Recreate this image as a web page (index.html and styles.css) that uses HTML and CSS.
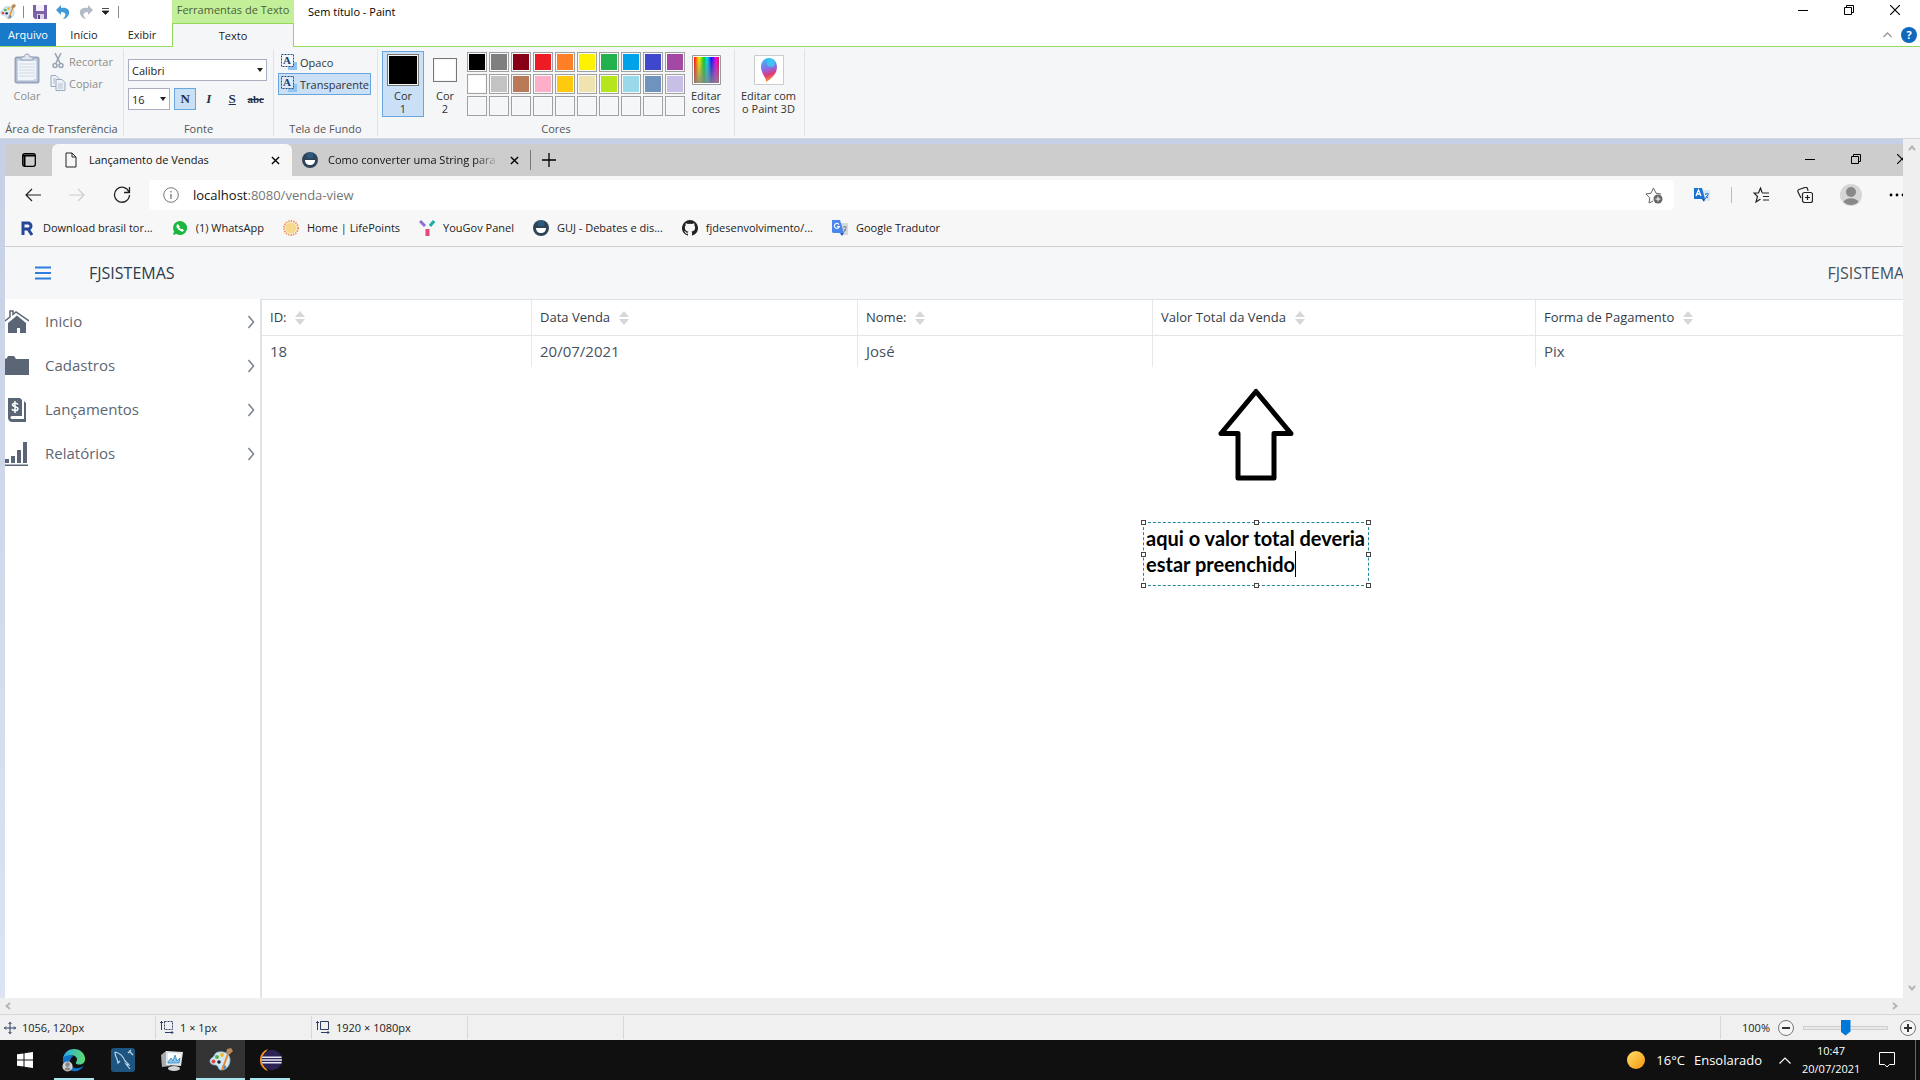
FILE: index.html
```html
<!DOCTYPE html>
<html lang="pt-BR">
<head>
    <meta charset="UTF-8">
    <meta name="viewport" content="width=device-width, initial-scale=1.0">
    <title>Sem título - Paint</title>
    <link rel="stylesheet" href="styles.css">
</head>
<body>
    <!-- shared symbols -->
    <svg class="symbols" aria-hidden="true">
        <symbol id="palette" viewBox="0 0 24 24">
            <path d="M10 4c7-1 11 3 11 8 0 6-4 10-9 10-3 0-2-4-5-5-3 0-6-1-6-4s3-3 4-5 2-4 5-4z" fill="#d3e9f5" stroke="#8fbfd8" stroke-width=".8"/>
            <circle cx="4.500" cy="13.500" r="2" fill="#e0483c"/><circle cx="8" cy="9" r="2" fill="#57b04a"/>
            <circle cx="13" cy="7" r="2" fill="#f2b632"/><circle cx="10" cy="14" r="1.800" fill="#223"/><circle cx="15" cy="19" r="2" fill="#3b82c8"/>
            <path d="M19 6l-6 16" stroke="#e8892b" stroke-width="2"/><path d="M18 1l4-1 2 3-3 3-2 1-2-2z" fill="#b98a5a"/>
        </symbol>
        <symbol id="guj" viewBox="0 0 16 16">
            <circle cx="8" cy="8" r="8" fill="#2f4459"/><path d="M6 1v5M8 0v6M10 1v5" stroke="#2f6ea3"/><path d="M3 8h10c0 3-2 5-5 5s-5-2-5-5z" fill="#fff"/>
        </symbol>
        <symbol id="sorter" viewBox="0 0 10 14">
            <path d="M5 0l5 6H0zM5 14l5-6H0z" fill="#d5d8db"/>
        </symbol>
        <symbol id="chevron" viewBox="0 0 8 14">
            <path d="M1.500 1l5 6-5 6" fill="none" stroke="#7d858e" stroke-width="1.600"/>
        </symbol>
        <symbol id="minimize" viewBox="0 0 10 10"><path d="M0 5.5h10" stroke="#000"/></symbol>
        <symbol id="restore" viewBox="0 0 10 10"><path d="M.5 2.5h7v7h-7zM2.5 2.5v-2h7v7h-2" fill="none" stroke="#000"/></symbol>
        <symbol id="close" viewBox="0 0 10 10"><path d="M0 0l10 10M10 0L0 10" stroke="#000" stroke-width="1.2"/></symbol>
    </svg>

    <header class="titlebar">
        <div class="quick">
            <svg class="q-palette" width="16" height="16"><use href="#palette"/></svg>
            <i class="q-sep"></i>
            <button aria-label="Salvar"><svg width="14" height="14" viewBox="0 0 14 14"><path d="M0 0h14v14H2l-2-2z" fill="#7d62a8"/><path d="M3 0h8v6H3z" fill="#f4effa"/><path d="M4 9h7v5H4z" fill="#d9d3e3"/><path d="M5 10h2v4H5z" fill="#5b4580"/></svg></button>
            <button aria-label="Desfazer"><svg width="14" height="14" viewBox="0 0 14 14"><path d="M5 0v3c5-1 9 1 8 6-1 3-4 5-6 5 4-4 3-7-2-7v3L0 5z" fill="#3f9ad6"/></svg></button>
            <button aria-label="Refazer"><svg width="14" height="14" viewBox="0 0 14 14"><path d="M9 0v3C4 2 0 4 1 9c1 3 4 5 6 5-4-4-3-7 2-7v3l5-5z" fill="#b3bac8"/></svg></button>
            <button aria-label="Personalizar"><svg width="7" height="7" viewBox="0 0 7 7"><path d="M0 .5h7M0 3h7L3.500 6.500z" stroke="#222" stroke-width=".8" fill="#222"/></svg></button>
            <i class="q-sep"></i>
        </div>
        <div class="context-title">Ferramentas de Texto</div>
        <h1 class="doc-title">Sem título - Paint</h1>
        <div class="win-buttons">
            <button aria-label="Minimizar"><svg width="10" height="10"><use href="#minimize"/></svg></button>
            <button aria-label="Restaurar"><svg width="10" height="10"><use href="#restore"/></svg></button>
            <button aria-label="Fechar"><svg width="10" height="10"><use href="#close"/></svg></button>
        </div>
    </header>

    <nav class="ribbon-tabs">
        <button class="tab-file">Arquivo</button>
        <button class="tab-home">Início</button>
        <button class="tab-view">Exibir</button>
        <button class="tab-text">Texto</button>
        <div class="ribbon-help">
            <button aria-label="Minimizar faixa"><svg width="9" height="6" viewBox="0 0 9 6"><path d="M.5 5l4-4 4 4" fill="none" stroke="#999" stroke-width="1.3"/></svg></button>
            <button class="help" aria-label="Ajuda">?</button>
        </div>
    </nav>

    <section class="ribbon">
        <div class="group clipboard">
            <div class="group-body">
                <button class="big" disabled>
                    <svg width="26" height="32" viewBox="0 0 26 32"><rect x="1.500" y="4.500" width="23" height="25" rx="1.500" fill="#c9d4e4" stroke="#97a4ba" stroke-width="2"/><path d="M4 8h18v17l-3 2H4z" fill="#f1f5fa"/><path d="M5 11h16M5 14h16M5 17h16M5 20h16M5 23h16" stroke="#cfd8e5"/><path d="M7 7V4h3c0-4 6-4 6 0h3v3z" fill="#dde4ee" stroke="#97a4ba"/></svg>
                    <span>Colar</span>
                </button>
                <div class="stack">
                    <button class="row-btn" disabled><svg width="16" height="16" viewBox="0 0 16 16"><path d="M5 0l5 10M11 0L6 10" stroke="#9aa3b3" stroke-width="1.600"/><circle cx="5" cy="12.500" r="2" fill="none" stroke="#9aa3b3" stroke-width="1.500"/><circle cx="11" cy="12.500" r="2" fill="none" stroke="#9aa3b3" stroke-width="1.500"/></svg>Recortar</button>
                    <button class="row-btn" disabled><svg width="16" height="16" viewBox="0 0 16 16"><path d="M1 .5h5l3 3v8H1z" fill="#eef2f7" stroke="#9aa8bf"/><path d="M6 4.500h6l3 3v8H6z" fill="#eef2f7" stroke="#9aa8bf"/><path d="M8 9h5M8 11h5M8 13h5M3 4h3M3 6h2M3 8h2" stroke="#b4bfd1"/></svg>Copiar</button>
                </div>
            </div>
            <div class="group-name">Área de Transferência</div>
        </div>

        <div class="group font">
            <div class="group-body">
                <label class="combo combo-font"><select aria-label="Família da fonte"><option>Calibri</option></select><i></i></label>
                <div class="font-row">
                    <label class="combo combo-size"><select aria-label="Tamanho da fonte"><option>16</option></select><i></i></label>
                    <button class="fmt active">N</button>
                    <button class="fmt italic">I</button>
                    <button class="fmt underline">S</button>
                    <button class="fmt strike">abc</button>
                </div>
            </div>
            <div class="group-name">Fonte</div>
        </div>

        <div class="group background">
            <div class="group-body">
                <button class="row-btn"><svg width="16" height="16" viewBox="0 0 16 16"><path d="M9 8h7v8H7v-3z" fill="#8fc4f5"/><path d="M.5.5h12v12H.5z" fill="#f4f8fc" stroke="#2a4a73" stroke-dasharray="2 1"/><text x="2" y="10" class="glyph-a">A</text></svg>Opaco</button>
                <button class="row-btn active"><svg width="16" height="16" viewBox="0 0 16 16"><path d="M9 8h7v8H7v-3z" fill="#8fc4f5"/><path d="M.5.5h12v12H.5z" fill="#dcebfa" stroke="#2a4a73" stroke-dasharray="2 1"/><text x="2" y="10" class="glyph-a">A</text></svg>Transparente</button>
            </div>
            <div class="group-name">Tela de Fundo</div>
        </div>

        <div class="group colors">
            <div class="group-body">
                <button class="color-btn active"><i class="well well-1"></i><span>Cor<br>1</span></button>
                <button class="color-btn"><i class="well well-2"></i><span>Cor<br>2</span></button>
                <div class="swatches" id="swatches"></div>
                <button class="color-btn"><svg width="29" height="30" viewBox="0 0 29 30">
                    <defs>
                        <linearGradient id="hues"><stop offset="0" stop-color="#f00"/><stop offset=".2" stop-color="#fe0"/><stop offset=".4" stop-color="#0c2"/><stop offset=".52" stop-color="#0df"/><stop offset=".7" stop-color="#11e"/><stop offset=".88" stop-color="#e0e"/><stop offset="1" stop-color="#e04"/></linearGradient>
                        <linearGradient id="fade" x2="0" y2="1"><stop offset="0" stop-color="#888" stop-opacity="0"/><stop offset="1" stop-color="#888" stop-opacity=".85"/></linearGradient>
                    </defs>
                    <path d="M.5.5h28v29H.5z" fill="#fff" stroke="#999"/><path d="M2 2h25v26H2z" fill="url(#hues)"/><path d="M2 2h25v26H2z" fill="url(#fade)"/></svg>
                    <span>Editar<br>cores</span></button>
            </div>
            <div class="group-name">Cores</div>
        </div>

        <div class="group paint3d">
            <div class="group-body">
                <button class="color-btn"><svg width="30" height="30" viewBox="0 0 30 30">
                    <defs><linearGradient id="drop" x1=".3" x2=".5" y2="1"><stop offset="0" stop-color="#29c5f2"/><stop offset=".45" stop-color="#8a6be6"/><stop offset=".7" stop-color="#e0387e"/><stop offset="1" stop-color="#f9a01b"/></linearGradient></defs>
                    <path d="M.5.5h29v29H.5z" fill="#fff" stroke="#ccc"/><path d="M12 27c1-4-5-8-5-15 0-5 3-9 8-9s8 4 8 9c0 7-6 12-11 15z" fill="url(#drop)"/><circle cx="17" cy="8" r="4" fill="#36d6f5" opacity=".7"/></svg>
                    <span>Editar com<br>o Paint 3D</span></button>
            </div>
        </div>
    </section>

    <main class="workspace">
        <div class="canvas">
            <div class="edge">
                <div class="edge-tabs">
                    <button class="tab-actions" aria-label="Guias"><svg width="14" height="14" viewBox="0 0 14 14"><rect x=".7" y=".7" width="12.600" height="12.600" rx="2" fill="none" stroke="#000" stroke-width="1.300"/><path d="M1 2.500h12M2.500 2v11" stroke="#000" stroke-width="2"/></svg></button>
                    <div class="edge-tab current">
                        <svg width="12" height="16" viewBox="0 0 12 16"><path d="M1 1h6l4 4v10H1zM7 1v4h4" fill="none" stroke="#222"/></svg>
                        <span>Lançamento de Vendas</span>
                        <button aria-label="Fechar guia"><svg width="9" height="9" viewBox="0 0 10 10"><path d="M1 1l8 8M9 1L1 9" stroke="#000" stroke-width="1.500"/></svg></button>
                    </div>
                    <div class="edge-tab other">
                        <svg width="16" height="16"><use href="#guj"/></svg>
                        <span>Como converter uma String para</span>
                        <button aria-label="Fechar guia"><svg width="9" height="9" viewBox="0 0 10 10"><path d="M1 1l8 8M9 1L1 9" stroke="#000" stroke-width="1.500"/></svg></button>
                    </div>
                    <button class="new-tab" aria-label="Nova guia"><svg width="14" height="14" viewBox="0 0 14 14"><path d="M7 0v14M0 7h14" stroke="#000" stroke-width="1.300"/></svg></button>
                    <div class="edge-win">
                        <button aria-label="Minimizar"><svg width="10" height="10"><use href="#minimize"/></svg></button>
                        <button aria-label="Restaurar"><svg width="10" height="10"><use href="#restore"/></svg></button>
                        <button aria-label="Fechar"><svg width="10" height="10"><use href="#close"/></svg></button>
                    </div>
                </div>

                <div class="edge-bar">
                    <div class="nav-buttons">
                        <button aria-label="Voltar"><svg width="16" height="14" viewBox="0 0 16 14"><path d="M16 7H1M7 1L1 7l6 6" fill="none" stroke="#222" stroke-width="1.200"/></svg></button>
                        <button aria-label="Avançar"><svg width="16" height="14" viewBox="0 0 16 14"><path d="M0 7h15M9 1l6 6-6 6" fill="none" stroke="#ccc" stroke-width="1.200"/></svg></button>
                        <button aria-label="Atualizar"><svg width="18" height="18" viewBox="0 0 18 18"><path d="M16 6A7.500 7.500 0 1 0 16.500 9M16.500 1v5.500H11" fill="none" stroke="#222" stroke-width="1.300"/></svg></button>
                    </div>
                    <div class="address">
                        <svg width="16" height="16" viewBox="0 0 16 16"><circle cx="8" cy="8" r="7.300" fill="none" stroke="#777"/><path d="M8 7v5M8 4v1.500" stroke="#777" stroke-width="1.300"/></svg>
                        <a class="url" href="#">localhost<span>:8080/venda-view</span></a>
                        <svg width="18" height="17" viewBox="0 0 18 17"><path d="M8 14l-4 2 .8-5L1 7l5-.8L8.500 1 11 6.200l5 .8" fill="none" stroke="#666"/><circle cx="13" cy="12" r="4.500" fill="#666"/><path d="M13 9.500v5M10.500 12h5" stroke="#fff"/></svg>
                    </div>
                    <div class="edge-tools">
                        <svg width="16" height="16" viewBox="0 0 16 16"><path d="M6 3h10v11H8z" fill="#dce6f0"/><path d="M0 1h8l3 11H0z" fill="#1b73d1"/><path d="M8 12h3l-1 3z" fill="#154fa0"/><path d="M11 7h4M13 6v1M14 8l-3 4M12 9l2 2" stroke="#1b73d1" fill="none"/><path d="M2 9l2.500-6L7 9M3 7h3" stroke="#fff" stroke-width="1.300" fill="none"/></svg>
                        <i class="tool-sep"></i>
                        <svg width="17" height="16" viewBox="0 0 17 16"><path d="M9 5.500L7.500 1 5.500 6H1l3.500 3.500L3 15l4.500-3M9 6h7M10 9.500h6M10 13h6" fill="none" stroke="#222" stroke-width="1.200"/></svg>
                        <svg width="16" height="16" viewBox="0 0 16 16"><rect x="5.500" y="5.500" width="10" height="10" rx="2" fill="none" stroke="#222" stroke-width="1.200"/><path d="M10.500 8v5M8 10.500h5M4 11L1 5c-.5-1 0-2 1-2.500l6-2c1-.3 2 0 2.500 1L11 4" stroke="#222" stroke-width="1.200" fill="none"/></svg>
                        <svg width="22" height="22" viewBox="0 0 22 22"><circle cx="11" cy="11" r="11" fill="#d6d6d6"/><circle cx="11" cy="8" r="5" fill="#888"/><path d="M3.500 18c2-5 13-5 15 0-4 4-11 4-15 0z" fill="#888"/></svg>
                        <svg width="16" height="4" viewBox="0 0 16 4"><circle cx="2" cy="2" r="1.400"/><circle cx="8" cy="2" r="1.400"/><circle cx="14" cy="2" r="1.400"/></svg>
                    </div>
                </div>

                <nav class="bookmarks">
                    <a href="#"><svg width="16" height="16" viewBox="0 0 16 16"><path d="M4 15V3h5a3 3 0 0 1 0 6H5M9 9l4 6" fill="none" stroke="#23479b" stroke-width="3"/></svg>Download brasil tor...</a>
                    <a href="#"><svg width="16" height="16" viewBox="0 0 16 16"><path d="M8 1a7 7 0 1 1-3.500 13L1 15l1-3.500A7 7 0 0 1 8 1z" fill="#1bb741"/><path d="M5.500 4.500c-1 1-1 3 1.500 5s4 2 4.500 1L10 9l-1 .8L6.500 7l.8-1z" fill="#fff" stroke="#fff"/></svg>(1) WhatsApp</a>
                    <a href="#"><svg width="16" height="16" viewBox="0 0 16 16"><circle cx="8" cy="8" r="7" fill="none" stroke="#ef9a5b" stroke-width="2" stroke-dasharray="1.500 1"/><circle cx="8" cy="8" r="5.500" fill="#f6d98c"/></svg>Home | LifePoints</a>
                    <a href="#"><svg width="16" height="16" viewBox="0 0 16 16"><path d="M1 1l5 5" stroke="#8a6fd8" stroke-width="3"/><path d="M15 1l-4 5" stroke="#1bb0a4" stroke-width="3"/><path d="M8.500 9v7" stroke="#e5487c" stroke-width="4"/></svg>YouGov Panel</a>
                    <a href="#"><svg width="16" height="16"><use href="#guj"/></svg>GUJ - Debates e dis...</a>
                    <a href="#"><svg width="16" height="16" viewBox="0 0 16 16"><path d="M8 0a8 8 0 0 0-2.500 15.600c.4 0 .5-.2.500-.4v-1.500c-2.200.5-2.700-1-2.700-1-.4-.9-.9-1.200-.9-1.200-.7-.5.1-.5.1-.5.800.1 1.200.8 1.200.8.700 1.300 1.900.9 2.300.7.100-.5.300-.9.500-1.100-1.800-.2-3.600-.9-3.600-4 0-.9.300-1.600.8-2.100-.1-.2-.4-1 .1-2.100 0 0 .7-.2 2.200.8a7.500 7.500 0 0 1 4 0c1.500-1 2.200-.8 2.200-.8.400 1.100.2 1.900.1 2.100.5.600.8 1.300.8 2.100 0 3.100-1.900 3.700-3.700 3.900.3.300.6.800.6 1.500v2.400c0 .2.100.5.500.4A8 8 0 0 0 8 0z" fill="#222"/></svg>fjdesenvolvimento/...</a>
                    <a href="#"><svg width="16" height="16" viewBox="0 0 16 16"><path d="M6 3h10v12H8z" fill="#d5dae0"/><path d="M0 0h8l4 13H1l-1-1z" fill="#4a86ee"/><path d="M8 13h4l-2 3z" fill="#2b5dc0"/><path d="M7 4.500a2.500 2.500 0 1 0 .3 2H5" stroke="#fff" stroke-width="1.100" fill="none"/><path d="M11 7h4M13 6v1M14 8l-2 4M12 9l2 2" stroke="#7d8791" fill="none"/></svg>Google Tradutor</a>
                </nav>

                <div class="app">
                    <header class="app-header">
                        <button aria-label="Menu"><svg width="16" height="14" viewBox="0 0 16 14"><path d="M0 1.500h16M0 7h16M0 12.500h16" stroke="#2f7de0" stroke-width="2"/></svg></button>
                        <h2>FJSISTEMAS</h2>
                        <span class="user">FJSISTEMAS</span>
                    </header>
                    <div class="app-body">
                        <nav class="drawer">
                            <a href="#"><svg width="24" height="24" viewBox="0 0 24 24"><path d="M12 5.500l9 7.500v10h-6v-5h-3v5H3V13z" fill="#5a6675"/><path d="M0 11l5-4V1h3v3.500L11 2l13 9" fill="none" stroke="#5a6675" stroke-width="1.500"/></svg><span>Inicio</span><svg width="8" height="14"><use href="#chevron"/></svg></a>
                            <a href="#"><svg width="24" height="24" viewBox="0 0 24 24"><path d="M0 5l2-1 1-2h6l2 3h13v16H0z" fill="#5a6675"/></svg><span>Cadastros</span><svg width="8" height="14"><use href="#chevron"/></svg></a>
                            <a href="#"><svg width="24" height="24" viewBox="0 0 24 24"><path d="M3 0h12l2 2v16H7c-2 0-2 3 0 3h12V3l2 2v19H7c-2 0-4-2-4-4z" fill="#5a6675"/><path d="M13 6.500c-1-2-6-1.500-5.500.5s6 1.500 5.500 4-5.500 2-6 0M10 3v12" fill="none" stroke="#fff" stroke-width="1.500"/></svg><span>Lançamentos</span><svg width="8" height="14"><use href="#chevron"/></svg></a>
                            <a href="#"><svg width="24" height="24" viewBox="0 0 24 24"><path d="M0 17h4v4H0zM6 14h4v7H6zM12 8h4v13h-4zM18 0h4v21h-4zM0 22.500h23V24H0z" fill="#5a6675"/></svg><span>Relatórios</span><svg width="8" height="14"><use href="#chevron"/></svg></a>
                        </nav>
                        <div class="content">
                            <table class="grid">
                                <thead>
                                    <tr>
                                        <th class="c-id">ID:<svg width="10" height="14"><use href="#sorter"/></svg></th>
                                        <th class="c-date">Data Venda<svg width="10" height="14"><use href="#sorter"/></svg></th>
                                        <th class="c-name">Nome:<svg width="10" height="14"><use href="#sorter"/></svg></th>
                                        <th class="c-total">Valor Total da Venda<svg width="10" height="14"><use href="#sorter"/></svg></th>
                                        <th>Forma de Pagamento<svg width="10" height="14"><use href="#sorter"/></svg></th>
                                    </tr>
                                </thead>
                                <tbody>
                                    <tr><td>18</td><td>20/07/2021</td><td>José</td><td></td><td>Pix</td></tr>
                                </tbody>
                            </table>
                        </div>
                    </div>
                </div>
            </div>

            <!-- drawn on the canvas -->
            <svg class="arrow" width="76" height="94" viewBox="0 0 76 94"><path d="M38 3.500L3 45.500h17V90h36V45.500h17z" fill="#fff" stroke="#000" stroke-width="5" stroke-linejoin="round"/></svg>
            <div class="textbox">
                <textarea aria-label="Texto" spellcheck="false">aqui o valor total deveria estar preenchido</textarea>
                <i class="caret"></i>
                <i class="h nw"></i><i class="h n"></i><i class="h ne"></i><i class="h w"></i><i class="h e"></i><i class="h sw"></i><i class="h s"></i><i class="h se"></i>
            </div>
        </div>
        <div class="vscroll">
            <svg width="8" height="6" viewBox="0 0 8 6"><path d="M1 5l3-3.500L7 5" fill="none" stroke="#b5b5b5" stroke-width="2"/></svg>
            <svg width="8" height="6" viewBox="0 0 8 6"><path d="M1 1l3 3.500L7 1" fill="none" stroke="#b5b5b5" stroke-width="2"/></svg>
        </div>
    </main>
    <div class="hscroll">
        <svg width="6" height="8" viewBox="0 0 6 8"><path d="M5 1L1.500 4 5 7" fill="none" stroke="#b5b5b5" stroke-width="2"/></svg>
        <svg width="6" height="8" viewBox="0 0 6 8"><path d="M1 1l3.500 3L1 7" fill="none" stroke="#b5b5b5" stroke-width="2"/></svg>
    </div>

    <footer class="status">
        <div class="cell"><svg width="12" height="12" viewBox="0 0 12 12"><path d="M6 0v12M0 6h12M4.500 2L6 .5 7.500 2M4.500 10L6 11.500 7.500 10M2 4.500L.5 6 2 7.500M10 4.500L11.500 6 10 7.500" fill="none" stroke="#2c3e66"/></svg>1056, 120px</div>
        <div class="cell"><svg width="14" height="13" viewBox="0 0 14 13"><path d="M4.500.5h8v8h-8z" fill="none" stroke="#2c3e66" stroke-dasharray="2 1"/><path d="M1.500 0v9M0 2l1.500-1.500L3 2M5 11.500h8M11.500 10l1.500 1.500-1.500 1.500" fill="none" stroke="#2c3e66"/></svg>1 × 1px</div>
        <div class="cell"><svg width="14" height="13" viewBox="0 0 14 13"><path d="M4.500.5h8v8h-8z" fill="none" stroke="#2c3e66"/><path d="M1.500 0v9M0 2l1.500-1.500L3 2M5 11.500h8M11.500 10l1.500 1.500-1.500 1.500" fill="none" stroke="#2c3e66"/></svg>1920 × 1080px</div>
        <div class="cell"></div>
        <div class="zoom">
            <span>100%</span>
            <button aria-label="Menos zoom"><svg width="16" height="16" viewBox="0 0 16 16"><circle cx="8" cy="8" r="7.500" fill="#f6f6f6" stroke="#777"/><path d="M4 8h8" stroke="#333" stroke-width="2"/></svg></button>
            <input type="range" aria-label="Zoom" min="0" max="100" value="50">
            <button aria-label="Mais zoom"><svg width="16" height="16" viewBox="0 0 16 16"><circle cx="8" cy="8" r="7.500" fill="#f6f6f6" stroke="#777"/><path d="M4 8h8M8 4v8" stroke="#333" stroke-width="2"/></svg></button>
        </div>
    </footer>

    <div class="taskbar">
        <button aria-label="Iniciar"><svg width="16" height="16" viewBox="0 0 16 16"><path d="M0 2.300L6.500 1.400v6.100H0zM7.500 1.200L16 0v7.500H7.500zM0 8.500h6.500v6.100L0 13.700zM7.500 8.500H16V16l-8.500-1.200z" fill="#fff"/></svg></button>
        <button class="open" aria-label="Edge"><svg width="24" height="24" viewBox="0 0 26 26">
            <defs><linearGradient id="wave"><stop offset="0" stop-color="#2aa9e8"/><stop offset="1" stop-color="#5fdc6c"/></linearGradient></defs>
            <path d="M1 12C2 4 8 1 13 1c7 0 12 5 12 11 0 4-3 6-6 6-4 0-5-2-3-4 1-3-1-6-5-6-5 0-8 1-10 4z" fill="url(#wave)"/><path d="M1 11c2-3 8-4 11-2-5 3-5 12 3 13 4 0 6-1 9-3-3 5-8 7-12 6C5 24 0 18 1 11z" fill="#1372c6"/><circle cx="6" cy="20" r="5.500" fill="#d2d2d2"/><circle cx="6" cy="18" r="2.500" fill="#888"/><path d="M2.500 23c1-3 6-3 7 0-2 2-5 2-7 0z" fill="#888"/></svg></button>
        <button aria-label="MySQL Workbench"><svg width="24" height="24" viewBox="0 0 24 24"><rect width="24" height="24" rx="3" fill="#1e5580"/><path d="M4 4c5 1 8 4 10 9 2 2 3 2 4 4l-3-1 4 5M4 4c0 4 1 5 2 7l1 4 2-2M18 3l4 4M17 5l3-3" fill="none" stroke="#bcd6e8" stroke-width="1.200"/></svg></button>
        <button aria-label="Monitor"><svg width="24" height="24" viewBox="0 0 24 24"><path d="M1 7l5-4 4 1v14l-8 1z" fill="#a9acae"/><path d="M6 3l17 1-2 14-15-1z" fill="#e2e5e7"/><path d="M8 5l13 1-2 10-11-1z" fill="#fff"/><path d="M8 14l3-4 2 3 2-6 2 6 3-3-1 5H8z" fill="#8cc3ea" stroke="#2d86c8" stroke-width=".8"/><ellipse cx="14" cy="20.500" rx="6" ry="2.500" fill="#d0d2d3"/></svg></button>
        <button class="open selected" aria-label="Paint"><svg width="24" height="24"><use href="#palette"/></svg></button>
        <button class="open" aria-label="Eclipse"><svg width="24" height="24" viewBox="0 0 26 26"><path d="M11 1a12.500 12.500 0 0 0 0 24A17 17 0 0 1 11 1z" fill="#f7941e"/><circle cx="15" cy="13" r="11" fill="#2c2255"/><path d="M4.500 10h21M4 13h22M4.500 16h21" stroke="#e8e6f2" stroke-width="1.500"/></svg></button>
        <div class="tray">
            <svg width="18" height="18" viewBox="0 0 18 18"><defs><linearGradient id="sun" x2="1" y2="1"><stop offset="0" stop-color="#fde06a"/><stop offset="1" stop-color="#f8960c"/></linearGradient></defs><circle cx="9" cy="9" r="9" fill="url(#sun)"/></svg>
            <span class="weather"><span>16°C</span><span>Ensolarado</span></span>
            <svg width="12" height="7" viewBox="0 0 12 7"><path d="M.5 6.500L6 1l5.500 5.500" fill="none" stroke="#fff" stroke-width="1.200"/></svg>
            <div class="clock">10:47<br>20/07/2021</div>
            <svg class="notify" width="16" height="16" viewBox="0 0 16 16"><path d="M.5.5h15v12h-5L8 15l-2.500-2.500h-5z" fill="none" stroke="#fff"/></svg>
        </div>
    </div>

    <script>
        const colors = [
            '#000000', '#7f7f7f', '#880015', '#ed1c24', '#ff7f27', '#fff200', '#22b14c', '#00a2e8', '#3f48cc', '#a349a4',
            '#ffffff', '#c3c3c3', '#b97a57', '#ffaec9', '#ffc90e', '#efe4b0', '#b5e61d', '#99d9ea', '#7092be', '#c8bfe7'
        ];
        const swatches = document.getElementById('swatches');
        for (let i = 0; i < 30; i++) {
            const button = document.createElement('button');
            button.setAttribute('aria-label', colors[i] || 'vazio');
            button.style.backgroundColor = colors[i] || 'transparent';
            swatches.appendChild(button);
        }
    </script>
</body>
</html>
```

FILE: styles.css
```css
* {
    box-sizing: border-box;
}
body {
    margin: 0;
    height: 100vh;
    display: flex;
    flex-direction: column;
    overflow: hidden;
    background: #fff;
    color: #222;
    font-family: "Open Sans", "Noto Sans", sans-serif;
    font-size: 11px;
    line-height: 13px;
}
button {
    margin: 0;
    padding: 0;
    border: 0;
    background: none;
    color: inherit;
    font: inherit;
}
a {
    color: inherit;
    text-decoration: none;
}
svg {
    display: block;
    flex: none;
}
.symbols {
    position: absolute;
    width: 0;
    height: 0;
}
.glyph-a {
    font: bold 11px "Liberation Serif", serif;
    fill: #20406a;
}

/* title bar */
.titlebar {
    display: flex;
    height: 23px;
}
.quick {
    display: flex;
    align-items: center;
    gap: 9px;
    width: 172px;
}
.q-sep {
    width: 1px;
    height: 12px;
    background: #888;
}
.q-palette {
    margin-right: -2px;
}
.context-title {
    width: 122px;
    background: #c3ef98;
    color: #4b5f3a;
    text-align: center;
    line-height: 20px;
}
.doc-title {
    margin: 0 0 0 14px;
    color: #000;
    font-size: 11px;
    font-weight: 400;
    line-height: 24px;
}
.win-buttons {
    display: flex;
    margin-left: auto;
    padding-right: 2px;
}
.win-buttons button,
.edge-win button {
    display: flex;
    align-items: center;
    justify-content: center;
    width: 46px;
    height: 20px;
}

/* ribbon tabs */
.ribbon-tabs {
    display: flex;
    height: 24px;
    border-bottom: 1px solid #92d95c;
}
.ribbon-tabs button {
    line-height: 22px;
}
.tab-file {
    width: 56px;
    background: #1979ca;
    color: #fff;
}
.tab-home {
    width: 56px;
}
.tab-view {
    width: 60px;
}
.ribbon-tabs .tab-text {
    width: 122px;
    height: 24px;
    border: 1px solid #92d95c;
    border-bottom: 0;
    background: #f5f6f7;
    line-height: 20px;
}
.ribbon-help {
    display: flex;
    align-items: center;
    gap: 9px;
    margin-left: auto;
    padding-right: 3px;
}
.ribbon-tabs .help {
    width: 16px;
    height: 16px;
    border-radius: 50%;
    background: #0f68bd;
    color: #fff;
    font-weight: 700;
    line-height: 16px;
}

/* ribbon */
.ribbon {
    display: flex;
    height: 92px;
    border-bottom: 1px solid #d2d5da;
    background: #f4f6f8;
}
.group {
    display: flex;
    flex-direction: column;
    margin: 2px 0;
    border-right: 1px solid #e0e2e5;
    color: #333;
}
.group-body {
    flex: 1;
}
.group-name {
    height: 14px;
    color: #555;
    text-align: center;
}
.clipboard {
    width: 124px;
}
.clipboard .group-body {
    display: flex;
    gap: 8px;
    padding: 4px 0 0 12px;
}
.big {
    display: flex;
    flex-direction: column;
    align-items: center;
    gap: 4px;
    width: 30px;
    height: 49px;
}
.big,
.clipboard .row-btn {
    color: #8d8d8d;
}
.row-btn {
    display: flex;
    align-items: center;
    gap: 3px;
    height: 22px;
}
.clipboard .stack {
    margin-top: -3px;
}
.font {
    width: 150px;
}
.font .group-body {
    padding: 10px 6px 0 4px;
}
.combo {
    position: relative;
    display: block;
    height: 22px;
}
.combo select {
    width: 100%;
    height: 22px;
    padding: 0 3px;
    border: 1px solid #abadc0;
    border-radius: 0;
    background: #fff;
    color: #222;
    font: inherit;
    appearance: none;
}
.combo i {
    position: absolute;
    right: 4px;
    top: 9px;
    border: 3px solid transparent;
    border-top: 4px solid #222;
    border-bottom: 0;
}
.font-row {
    display: flex;
    gap: 1px;
    margin-top: 7px;
}
.combo-size {
    width: 43px;
    margin-right: 3px;
}
.fmt {
    width: 23px;
    height: 22px;
    border: 1px solid transparent;
    color: #1f3047;
    font: bold 13px "Liberation Serif", serif;
}
.active {
    border: 1px solid #6aa5dc;
    background: #c9e0f7;
}
.italic {
    font-style: italic;
}
.underline {
    text-decoration: underline;
}
.strike {
    font-size: 11px;
    text-decoration: line-through;
}
.background {
    width: 104px;
}
.background .group-body {
    padding: 2px 2px 0 4px;
}
.background .row-btn {
    width: 93px;
    padding-left: 2px;
    border: 1px solid transparent;
}
.background .row-btn.active {
    border-color: #6aa5dc;
}
.colors {
    width: 357px;
}
.colors .group-body {
    display: flex;
    padding: 2px 0 0 4px;
}
.color-btn {
    display: flex;
    flex-direction: column;
    align-items: center;
    width: 42px;
    height: 66px;
    padding: 3px 0 1px;
    border: 1px solid transparent;
}
.color-btn.active {
    padding-top: 2px;
    border-color: #6aa5dc;
}
.color-btn span {
    margin-top: auto;
}
.well {
    border: 1px solid #777;
    box-shadow: inset 0 0 0 1px #f5f5f5;
}
.well-1 {
    width: 32px;
    height: 32px;
    background: #000;
}
.well-2 {
    width: 24px;
    height: 24px;
    margin-top: 3px;
    background: #fff;
}
.swatches {
    display: grid;
    grid-template-columns: repeat(10, 20px);
    grid-auto-rows: 20px;
    gap: 2px;
    padding: 1px 0 0 1px;
}
.swatches button {
    border: 1px solid #a0a0a0;
    box-shadow: inset 0 0 0 1px #f8f9fa;
}
.paint3d {
    width: 70px;
}
.paint3d .group-body {
    padding-top: 2px;
}
.paint3d .color-btn {
    width: 67px;
}

/* canvas and scroll bars */
.workspace {
    display: flex;
    flex: 1;
    min-height: 0;
    background: #efefef;
}
.canvas {
    position: relative;
    flex: 1;
    min-width: 0;
    overflow: hidden;
    padding: 5px 0 0 5px;
    background: linear-gradient(#c6d0e4, #dce3f3);
}
.vscroll {
    display: flex;
    flex-direction: column;
    align-items: center;
    justify-content: space-between;
    width: 17px;
    padding: 6px 0 7px;
}
.hscroll {
    display: flex;
    align-items: center;
    justify-content: space-between;
    height: 16px;
    padding: 0 22px 0 5px;
    background: #efefef;
}

/* browser window */
.edge {
    display: flex;
    flex-direction: column;
    height: 100%;
    background: #fff;
}
.edge-tabs {
    display: flex;
    align-items: center;
    height: 32px;
    background: #cdcdcd;
    color: #111;
}
.tab-actions {
    display: flex;
    justify-content: center;
    width: 47px;
}
.edge-tab {
    display: flex;
    align-items: center;
    height: 32px;
}
.edge-tab span {
    flex: 1;
    overflow: hidden;
    padding-bottom: 2px;
    white-space: nowrap;
}
.current {
    gap: 12px;
    width: 240px;
    padding: 0 12px 0 13px;
    border-radius: 6px 6px 0 0;
    background: #f7f7f7;
}
.other {
    gap: 10px;
    width: 239px;
    height: 20px;
    padding: 0 11px 0 10px;
    border-right: 1px solid #777;
}
.other span {
    -webkit-mask-image: linear-gradient(90deg, #000 85%, transparent);
    mask-image: linear-gradient(90deg, #000 85%, transparent);
}
.new-tab {
    margin-left: 11px;
}
.edge-win {
    display: flex;
    margin-left: auto;
    margin-right: -22px;
    padding-bottom: 2px;
}
.edge-bar {
    display: flex;
    align-items: center;
    height: 38px;
    background: #f7f7f7;
}
.nav-buttons {
    display: flex;
    align-items: center;
    gap: 28px;
    width: 144px;
    padding-left: 20px;
}
.address {
    display: flex;
    flex: 1;
    align-items: center;
    height: 30px;
    padding: 0 11px 0 14px;
    border-radius: 4px;
    background: #fff;
}
.url {
    flex: 1;
    margin-left: 14px;
    color: #111;
    font-size: 13px;
}
.url span {
    color: #767676;
}
.edge-tools {
    display: flex;
    align-items: center;
    gap: 27px;
    margin-right: -2px;
    padding-left: 20px;
}
.tool-sep {
    width: 1px;
    height: 16px;
    margin: 0 -6px;
    background: #bbb;
}
.bookmarks {
    display: flex;
    gap: 19px;
    height: 33px;
    padding-left: 14px;
    border-bottom: 1px solid #cfcfcf;
    background: #f7f7f7;
    color: #222;
}
.bookmarks a {
    display: flex;
    align-items: center;
    gap: 8px;
    height: 27px;
    white-space: nowrap;
}

/* web app */
.app {
    display: flex;
    flex: 1;
    flex-direction: column;
    font-size: 15px;
    line-height: 20px;
}
.app-header {
    display: flex;
    align-items: center;
    height: 52px;
    padding-left: 30px;
    background: #f5f7f9;
    color: #2f3a4a;
    font-size: 16px;
}
.app-header h2 {
    margin: 0 0 0 38px;
    font-size: 16px;
    font-weight: 500;
}
.user {
    margin: 0 -10px 0 auto;
    color: #46505e;
}
.app-body {
    display: flex;
    flex: 1;
}
.drawer {
    width: 257px;
    border-right: 2px solid #e0e3e7;
    color: #5d6672;
    font-weight: 500;
}
.drawer a {
    display: flex;
    align-items: center;
    gap: 16px;
    height: 44px;
    padding-right: 5px;
}
.drawer svg {
    margin-top: 2px;
}
.drawer span {
    flex: 1;
}
.content {
    flex: 1;
    min-width: 0;
    border-top: 1px solid #dfe2e5;
}
.grid {
    width: 100%;
    border-collapse: separate;
    border-spacing: 0;
    table-layout: fixed;
    color: #47525f;
}
.grid th,
.grid td {
    padding: 0 8px 2px;
    border-right: 1px solid #e6e8ea;
    text-align: left;
    white-space: nowrap;
}
.grid th:last-child,
.grid td:last-child {
    border-right: 0;
}
.grid th {
    height: 36px;
    border-bottom: 1px solid #e3e5e7;
    color: #323c49;
    font-size: 13px;
    font-weight: 500;
}
.grid td {
    height: 31px;
}
.grid th svg {
    display: inline-block;
    margin-left: 9px;
    vertical-align: -3px;
}
.c-id {
    width: 270px;
}
.c-date {
    width: 326px;
}
.c-name {
    width: 295px;
}
.c-total {
    width: 383px;
}

/* shapes placed on the canvas */
.arrow {
    position: absolute;
    left: 1218px;
    top: 249px;
}
.textbox {
    position: absolute;
    left: 1143px;
    top: 383px;
    width: 226px;
    height: 64px;
    border: 1px dashed #2584a0;
}
.textbox textarea {
    display: block;
    width: 100%;
    height: 100%;
    padding: 2px 0 0 2px;
    border: 0;
    outline: 0;
    background: none;
    color: #000;
    font: bold 20px/26px Lato, sans-serif;
    resize: none;
    overflow: hidden;
}
.caret {
    position: absolute;
    left: 151px;
    top: 28px;
    width: 1px;
    height: 26px;
    background: #000;
}
.h {
    position: absolute;
    width: 5px;
    height: 5px;
    border: 1px solid #444;
    background: #fff;
}
.nw, .n, .ne {
    top: -3px;
}
.sw, .s, .se {
    bottom: -3px;
}
.nw, .w, .sw {
    left: -3px;
}
.ne, .e, .se {
    right: -3px;
}
.n, .s {
    left: 110px;
}
.w, .e {
    top: 29px;
}

/* status bar */
.status {
    display: flex;
    height: 26px;
    padding: 1px 0;
    border-top: 1px solid #d7d7d7;
    background: #f0f0f0;
}
.cell {
    display: flex;
    align-items: center;
    gap: 6px;
    width: 156px;
    padding-left: 4px;
    border-right: 1px solid #d7d7d7;
}
.zoom {
    display: flex;
    align-items: center;
    gap: 8px;
    margin-left: auto;
    padding: 0 4px 0 21px;
    border-left: 1px solid #d7d7d7;
}
.zoom input {
    width: 85px;
    height: 18px;
    margin: 0 4px 0 1px;
    appearance: none;
    background: none;
}
.zoom input::-webkit-slider-runnable-track {
    height: 4px;
    border: 1px solid #cfcfcf;
    background: #e8e8e8;
}
.zoom input::-webkit-slider-thumb {
    width: 10px;
    height: 16px;
    margin-top: -7px;
    appearance: none;
    background: #0078d7;
    clip-path: polygon(0 0, 100% 0, 100% 75%, 50% 100%, 0 75%);
}

/* taskbar */
.taskbar {
    display: flex;
    height: 40px;
    background: #101010;
    color: #fff;
}
.taskbar button {
    position: relative;
    display: flex;
    align-items: center;
    justify-content: center;
    width: 49px;
}
.open::after {
    content: "";
    position: absolute;
    left: 5px;
    right: 4px;
    bottom: 0;
    height: 2px;
    background: #a9e6ee;
}
.selected {
    background: #333;
}
.selected::after {
    left: 0;
    right: 0;
}
.tray {
    display: flex;
    align-items: center;
    gap: 11px;
    margin-left: auto;
    margin-right: 4px;
    padding-right: 20px;
    border-right: 1px solid #666;
}
.weather {
    display: flex;
    gap: 9px;
    margin-right: 6px;
    font-size: 13px;
}
.clock {
    width: 58px;
    text-align: center;
    line-height: 18px;
    white-space: nowrap;
}
.notify {
    margin-left: 8px;
}
```
